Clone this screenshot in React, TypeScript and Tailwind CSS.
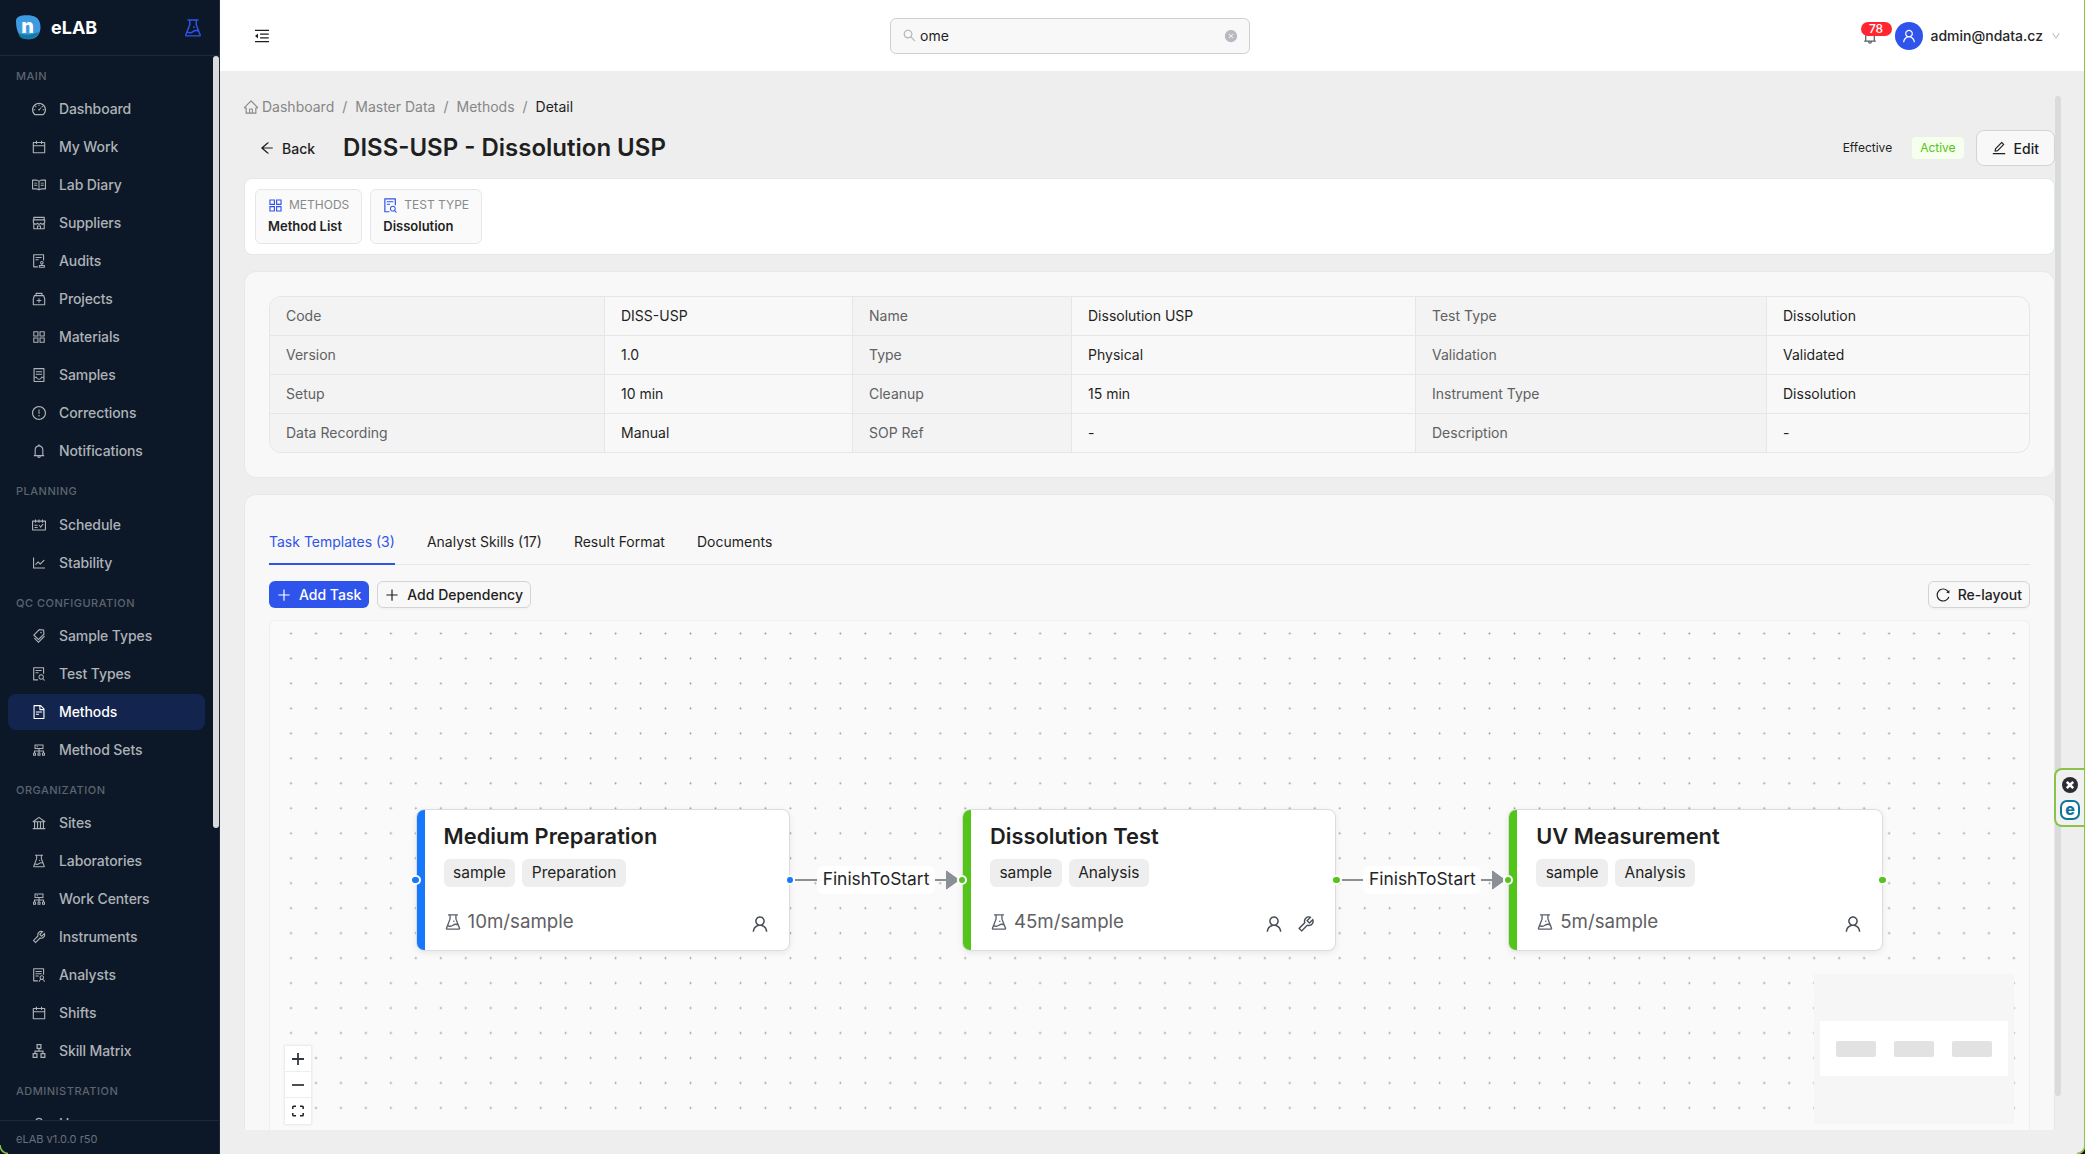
import React from 'react'
import type { IconType } from 'react-icons'
import {
  AiFillCloseCircle,
  AiOutlineApartment,
  AiOutlineAppstore,
  AiOutlineArrowLeft,
  AiOutlineAudit,
  AiOutlineBank,
  AiOutlineBell,
  AiOutlineCalendar,
  AiOutlineCluster,
  AiOutlineContainer,
  AiOutlineDashboard,
  AiOutlineDown,
  AiOutlineEdit,
  AiOutlineExclamationCircle,
  AiOutlineExperiment,
  AiOutlineFileSearch,
  AiOutlineFileText,
  AiOutlineHome,
  AiOutlineLineChart,
  AiOutlineMedicineBox,
  AiOutlineMenuFold,
  AiOutlinePlus,
  AiOutlineRead,
  AiOutlineReload,
  AiOutlineSchedule,
  AiOutlineSearch,
  AiOutlineShop,
  AiOutlineSolution,
  AiOutlineTags,
  AiOutlineTool,
  AiOutlineUser,
} from 'react-icons/ai'

type MenuItem = { label: string; icon: IconType }

const menu: { title: string; items: MenuItem[] }[] = [
  {
    title: 'MAIN',
    items: [
      { label: 'Dashboard', icon: AiOutlineDashboard },
      { label: 'My Work', icon: AiOutlineCalendar },
      { label: 'Lab Diary', icon: AiOutlineRead },
      { label: 'Suppliers', icon: AiOutlineShop },
      { label: 'Audits', icon: AiOutlineAudit },
      { label: 'Projects', icon: AiOutlineMedicineBox },
      { label: 'Materials', icon: AiOutlineAppstore },
      { label: 'Samples', icon: AiOutlineContainer },
      { label: 'Corrections', icon: AiOutlineExclamationCircle },
      { label: 'Notifications', icon: AiOutlineBell },
    ],
  },
  {
    title: 'PLANNING',
    items: [
      { label: 'Schedule', icon: AiOutlineSchedule },
      { label: 'Stability', icon: AiOutlineLineChart },
    ],
  },
  {
    title: 'QC CONFIGURATION',
    items: [
      { label: 'Sample Types', icon: AiOutlineTags },
      { label: 'Test Types', icon: AiOutlineFileSearch },
      { label: 'Methods', icon: AiOutlineFileText },
      { label: 'Method Sets', icon: AiOutlineCluster },
    ],
  },
  {
    title: 'ORGANIZATION',
    items: [
      { label: 'Sites', icon: AiOutlineBank },
      { label: 'Laboratories', icon: AiOutlineExperiment },
      { label: 'Work Centers', icon: AiOutlineCluster },
      { label: 'Instruments', icon: AiOutlineTool },
      { label: 'Analysts', icon: AiOutlineSolution },
      { label: 'Shifts', icon: AiOutlineCalendar },
      { label: 'Skill Matrix', icon: AiOutlineApartment },
    ],
  },
  {
    title: 'ADMINISTRATION',
    items: [{ label: 'Users', icon: AiOutlineUser }],
  },
]

const details = [
  ['Code', 'DISS-USP', 'Name', 'Dissolution USP', 'Test Type', 'Dissolution'],
  ['Version', '1.0', 'Type', 'Physical', 'Validation', 'Validated'],
  ['Setup', '10 min', 'Cleanup', '15 min', 'Instrument Type', 'Dissolution'],
  ['Data Recording', 'Manual', 'SOP Ref', '-', 'Description', '-'],
]

const tabs = ['Task Templates (3)', 'Analyst Skills (17)', 'Result Format', 'Documents']

// x is relative to the left edge of the canvas
const tasks = [
  { name: 'Medium Preparation', tags: ['sample', 'Preparation'], time: '10m/sample', tool: false, x: 145.6, blue: true },
  { name: 'Dissolution Test', tags: ['sample', 'Analysis'], time: '45m/sample', tool: true, x: 691.9, blue: false },
  { name: 'UV Measurement', tags: ['sample', 'Analysis'], time: '5m/sample', tool: false, x: 1238.2, blue: false },
]

const edges = [525, 1071.3]

function Logo() {
  return (
    <div className="relative flex h-[25px] w-[25px] items-center justify-center">
      <svg className="absolute inset-0" width="25" height="25" viewBox="0 0 25 25">
        <path d="M0 6C0 2 4 .3 11 .3c7 0 11.500 2 13 8 1.500 6-.5 12-5 14.500-4 2.200-11 2-14-1C1.300 18 0 12 0 6z" fill="#3f9be0" />
        <path d="M2.500 18c5 2.500 14 2 20.500-1-1 3-3 5-6.500 6.500-4 1.200-9 .8-11.500-.8-1.400-1-2.200-2.700-2.500-4.700z" fill="#137aa3" />
      </svg>
      <span className="relative -top-[2px] -left-[1px] text-[20px] leading-none font-extrabold text-white">n</span>
    </div>
  )
}

function Sidebar() {
  return (
    <aside className="flex h-full w-[220px] shrink-0 flex-col border-r border-[#1f2b3b] bg-[#0c1828]">
      <div className="flex h-14 shrink-0 items-center border-b border-[#1d2939] pr-[15px] pl-4">
        <Logo />
        <span className="ml-[10px] text-[18px] font-bold text-white">eLAB</span>
        <AiOutlineExperiment className="ml-auto text-[22px] text-[#2f54eb]" />
      </div>
      <div className="flex min-h-0 flex-1 justify-between">
        <nav className="h-full w-[213px] overflow-hidden">
          {menu.map((group) => (
            <div key={group.title}>
              <div className="h-[35.3px] pt-3 pl-4 text-[11px] leading-[17.3px] font-medium tracking-[0.5px] text-[#5d646e]">
                {group.title}
              </div>
              {group.items.map(({ label, icon: Icon }) => (
                <div
                  key={label}
                  className={`mb-0.5 ml-2 flex h-9 w-[197px] items-center rounded-lg pl-[23px] text-sm font-medium tracking-[-0.1px] ${
                    label === 'Methods' ? 'bg-[#13244e] text-white' : 'text-[#aeb2b7]'
                  }`}
                >
                  <Icon className="text-[16px]" />
                  <span className="ml-3">{label}</span>
                </div>
              ))}
            </div>
          ))}
        </nav>
        <div className="h-[772px] w-1.5 rounded-full bg-[#d9dcdb]" />
      </div>
      <div className="flex h-[34px] shrink-0 items-center border-t border-[#1d2939] pt-1 pl-4 text-[11px] text-[#6a717b]">
        eLAB v1.0.0 r50
      </div>
    </aside>
  )
}

function Header() {
  return (
    <header className="flex h-[71px] shrink-0 items-center bg-white pr-6 pl-[33px]">
      <AiOutlineMenuFold className="text-[18px] text-[#1f1f1f]" />
      <div className="ml-[619px] flex h-9 w-[360px] items-center rounded-md border border-[#d0d0d0] bg-[#f8f8f8] px-[11px] text-sm">
        <AiOutlineSearch className="text-[15px] text-[#b4b4b8]" />
        <span className="ml-[3px] text-[#1f1f1f]">ome</span>
        <AiFillCloseCircle className="ml-auto text-[14px] text-[#b9b9c0]" />
      </div>
      <div className="ml-auto flex items-center">
        <div className="relative">
          <AiOutlineBell className="text-[18px] text-[#595f69]" />
          <span className="absolute -top-[5px] left-0 flex h-[14px] w-[31px] items-center justify-center rounded-full bg-[#ff2630] text-[12px] font-medium text-white">
            78
          </span>
        </div>
        <div className="ml-4 flex h-7 w-7 items-center justify-center rounded-full bg-[#2f54eb]">
          <AiOutlineUser className="text-[16px] text-white" />
        </div>
        <span className="ml-2 text-sm font-medium text-[#262626]">admin@ndata.cz</span>
        <AiOutlineDown className="ml-2 text-[10px] text-[#a0a0a0]" />
      </div>
    </header>
  )
}

function Breadcrumb() {
  return (
    <div className="flex h-[22px] items-center text-sm text-[#868686]">
      <AiOutlineHome className="-ml-px text-[16px]" />
      <span className="ml-[3px]">Dashboard</span>
      <span className="mx-2">/</span>
      <span>Master Data</span>
      <span className="mx-2">/</span>
      <span>Methods</span>
      <span className="mx-2">/</span>
      <span className="text-[#1f1f1f]">Detail</span>
    </div>
  )
}

function LinkTile({ icon: Icon, label, value }: { icon: IconType; label: string; value: string }) {
  return (
    <div className="h-[55px] rounded-md border border-[#e6e6e8] bg-[#fafafa] px-3 pt-[5px]">
      <div className="flex h-5 items-center text-[12px] text-[#868a8c]">
        <Icon className="-ml-px text-[17px] text-[#2f54eb]" />
        <span className="ml-[5px]">{label}</span>
      </div>
      <div className="mt-px text-[13px] leading-5 font-semibold text-[#1f1f1f]">{value}</div>
    </div>
  )
}

function DetailsTable() {
  return (
    <div className="overflow-hidden rounded-xl border border-[#e6e6e6] text-sm">
      {details.map((row, i) => (
        <div
          key={row[0]}
          className={`grid grid-cols-[335px_248px_219px_344px_351px_1fr] ${i ? 'h-[39px] border-t border-[#e6e6e6]' : 'h-[38px]'}`}
        >
          {row.map((cell, j) => (
            <div
              key={j}
              className={`flex items-center pl-4 ${j < 5 ? 'border-r border-[#e6e6e6]' : ''} ${
                j % 2 ? 'text-[#1f1f1f]' : 'bg-[#f3f3f3] text-[#5f6163]'
              }`}
            >
              {cell}
            </div>
          ))}
        </div>
      ))}
    </div>
  )
}

function Handle({ blue, side }: { blue: boolean; side: 'left' | 'right' }) {
  return (
    <span
      className={`absolute top-[65.5px] h-[10.6px] w-[10.6px] rounded-full border-2 border-white ${
        blue ? 'bg-[#1677ff]' : 'bg-[#52c41a]'
      } ${side === 'left' ? '-left-[5.3px]' : '-right-[5.3px]'}`}
    />
  )
}

function TaskNode({ task }: { task: (typeof tasks)[number] }) {
  return (
    <div className="absolute top-[188px] h-[142px] w-[374.6px]" style={{ left: task.x }}>
      <div className="flex h-full overflow-hidden rounded-[8px] border border-[#dcdcdc] bg-white shadow-[0_2px_6px_rgba(0,0,0,0.08)]">
        <div className={`-my-px -ml-px w-[9px] shrink-0 ${task.blue ? 'bg-[#1677ff]' : 'bg-[#52c41a]'}`} />
        <div className="flex flex-1 flex-col pt-[11px] pr-5 pl-[19px]">
          <div className="text-[21.85px] leading-[30px] font-semibold text-[#1f1f1f]">{task.name}</div>
          <div className="mt-2 flex gap-[7px]">
            {task.tags.map((tag) => (
              <span key={tag} className="flex h-7 items-center rounded-[6px] bg-[#eeeeee] px-[9.5px] text-[15.5px] text-[#1f1f1f]">
                {tag}
              </span>
            ))}
          </div>
          <div className="mt-[21px] flex h-[28px] items-center text-[18.7px] text-[#5f6163]">
            <AiOutlineExperiment className="-ml-px text-[20px] text-[#595f69]" />
            <span className="ml-[5px]">{task.time}</span>
            <div className="-mr-px ml-auto flex gap-3 pt-1 text-[20px] text-[#474d57]">
              <AiOutlineUser />
              {task.tool && <AiOutlineTool />}
            </div>
          </div>
        </div>
      </div>
      <Handle blue={task.blue} side="left" />
      <Handle blue={task.blue} side="right" />
    </div>
  )
}

function Edge({ x }: { x: number }) {
  return (
    <div className="absolute top-[245px] h-7 w-[164px]" style={{ left: x }}>
      <svg className="absolute inset-0" width="164" height="28" viewBox="0 0 164 28">
        <path d="M0 14h152" stroke="#8b9097" strokeWidth="2" />
        <path d="M151.500 5l12.500 9-12.500 9z" fill="#8b9097" stroke="#8b9097" strokeLinejoin="round" />
      </svg>
      <div className="absolute left-[22px] flex h-7 w-[118px] items-center justify-center rounded-[6px] bg-white/95 pb-0.5 text-[17.4px] text-[#262626]">
        FinishToStart
      </div>
    </div>
  )
}

function Canvas() {
  return (
    <div className="relative mt-3 h-[640px] rounded-md border border-[#efefef] bg-[#fafafa]">
      <svg className="absolute inset-0" width="1759" height="509">
        <defs>
          <pattern id="dots" x="8.500" y="0" width="24.97" height="24.97" patternUnits="userSpaceOnUse">
            <circle cx="12.500" cy="12.500" r="0.9" fill="#92929a" />
          </pattern>
        </defs>
        <rect width="1759" height="509" fill="url(#dots)" />
      </svg>
      {edges.map((x) => (
        <Edge key={x} x={x} />
      ))}
      {tasks.map((task) => (
        <TaskNode key={task.name} task={task} />
      ))}
      <div className="absolute top-[425px] left-[15px] w-[26px] bg-white shadow-[0_0_2px_1px_rgba(0,0,0,0.08)]">
        <div className="flex h-[26px] items-center justify-center border-b border-[#eeeeee]">
          <svg width="12" height="12" viewBox="0 0 12 12">
            <path d="M6 0v12M0 6h12" stroke="#333841" strokeWidth="1.800" />
          </svg>
        </div>
        <div className="flex h-[26px] items-center justify-center border-b border-[#eeeeee]">
          <svg width="12" height="12" viewBox="0 0 12 12">
            <path d="M0 6h12" stroke="#222" strokeWidth="1.600" />
          </svg>
        </div>
        <div className="flex h-[26px] items-center justify-center">
          <svg width="12" height="12" viewBox="0 0 12 12" fill="none" stroke="#222" strokeWidth="1.500">
            <path d="M.8 4V2Q.8 1.200 1.600 1.200H4M8 1.200h2.400q.8 0 .8.8v2M11.200 8v2q0 .8-.8.8H8M4 10.800H1.600Q.8 10.800.8 10V8" />
          </svg>
        </div>
      </div>
      <div className="absolute top-[353px] left-[1544px] h-[150px] w-[200px] bg-[#f6f6f6] pt-[47px] pl-[6px]">
        <div className="flex h-[55px] w-[188px] items-center gap-[18px] bg-white pt-px pl-4">
          <div className="h-4 w-10 rounded-[2px] bg-[#e2e2e2]" />
          <div className="h-4 w-10 rounded-[2px] bg-[#e2e2e2]" />
          <div className="h-4 w-10 rounded-[2px] bg-[#e2e2e2]" />
        </div>
      </div>
    </div>
  )
}

function SideWidget() {
  return (
    <div className="absolute top-[768px] right-0 flex h-[59px] w-[31px] flex-col items-center gap-[7px] rounded-l-lg border-2 border-r-0 border-[#8bc34a] bg-[#f1f1f1] pt-[7px] pr-px">
      <svg width="16" height="16" viewBox="0 0 16 16">
        <circle cx="8" cy="8" r="8" fill="#2b2d36" />
        <path d="M4.800 4.800l6.400 6.400M11.200 4.800l-6.400 6.400" stroke="#fff" strokeWidth="2.600" />
      </svg>
      <div className="flex h-5 w-5 items-center justify-center rounded-[7px] border-2 border-[#11749b] bg-white pb-0.5 text-[16px] leading-none font-extrabold text-[#11749b]">
        e
      </div>
    </div>
  )
}

function App() {
  return (
    <div className="relative flex h-[1154px] w-[2085px] overflow-hidden bg-[#eeeeee] font-['Inter',sans-serif]">
      <Sidebar />
      <div className="flex min-w-0 flex-1 flex-col">
        <Header />
        <main className="mt-[25px] flex h-[1034px] pl-6">
          <div className="h-full w-[1811px] overflow-hidden">
            <Breadcrumb />
            <div className="mt-3 flex h-9 items-center">
              <div className="flex items-center pl-[15px] text-sm font-medium text-[#1f1f1f]">
                <AiOutlineArrowLeft className="text-[16px]" />
                <span className="ml-[7px] pt-0.5">Back</span>
              </div>
              <h1 className="ml-7 text-[24px] font-semibold text-[#1f1f1f]">DISS-USP - Dissolution USP</h1>
              <span className="ml-auto text-[12px] text-[#1f1f1f]">Effective</span>
              <span className="ml-5 flex h-[22px] items-center rounded bg-[#f6ffed] px-2 text-[12px] text-[#52c41a]">Active</span>
              <button className="ml-3 flex h-9 items-center rounded-lg border border-[#d4d4d4] bg-[#f8f8f8] px-[15px] text-sm font-medium text-[#1f1f1f]">
                <AiOutlineEdit className="-mx-px text-[16px]" />
                <span className="ml-2 pt-0.5">Edit</span>
              </button>
            </div>

            <div className="mt-3 flex h-[77px] gap-2 rounded-lg border border-[#e6e7ee] bg-white p-[10px]">
              <LinkTile icon={AiOutlineAppstore} label="METHODS" value="Method List" />
              <LinkTile icon={AiOutlineFileSearch} label="TEST TYPE" value="Dissolution" />
            </div>

            <div className="mt-4 rounded-xl border border-[#e8e8e8] bg-[#f8f8f8] p-6">
              <DetailsTable />
            </div>

            <div className="mt-4 rounded-xl border border-[#e8e8e8] bg-[#f8f8f8] px-6 pt-6">
              <div className="flex h-[46px] gap-8 border-b border-[#e6e6e6] text-sm text-[#1f1f1f]">
                {tabs.map((tab, i) => (
                  <div key={tab} className={`h-[46px] pt-[13px] ${i === 0 ? 'border-b-2 border-[#2f54eb] text-[#2f54eb]' : ''}`}>
                    {tab}
                  </div>
                ))}
              </div>
              <div className="mt-4 flex h-[27px] gap-2 text-sm font-medium">
                <button className="flex items-center rounded-md bg-[#2f54eb] px-2 text-white">
                  <AiOutlinePlus className="-mx-px text-[16px]" />
                  <span className="ml-2">Add Task</span>
                </button>
                <button className="flex items-center rounded-md border border-[#d4d4d4] px-[7px] text-[#1f1f1f] shadow-[0_2px_0_rgba(0,0,0,0.02)]">
                  <AiOutlinePlus className="-mx-px text-[16px]" />
                  <span className="ml-2">Add Dependency</span>
                </button>
                <button className="ml-auto flex items-center rounded-md border border-[#d4d4d4] px-[7px] text-[#1f1f1f] shadow-[0_2px_0_rgba(0,0,0,0.02)]">
                  <AiOutlineReload className="-mx-px text-[16px]" />
                  <span className="ml-2">Re-layout</span>
                </button>
              </div>
              <Canvas />
            </div>
          </div>
          <div className="h-[1000px] w-1.5 rounded-full bg-[#d9dcdb]" />
        </main>
      </div>
      <SideWidget />
      <div className="absolute top-0 right-0 h-full w-px bg-[#8bc34a]" />
      <svg className="absolute bottom-0 left-0" width="8" height="9" viewBox="0 0 8 9">
        <path d="M0 3v6h6Q1.500 8 0 3z" fill="#111" />
        <path d="M0 0Q.5 7.500 8 8.500" stroke="#8bc34a" strokeWidth="1.500" fill="none" />
      </svg>
      <svg className="absolute right-0 bottom-0" width="8" height="9" viewBox="0 0 8 9">
        <path d="M8 3v6H2Q6.500 8 8 3z" fill="#111" />
        <path d="M8 0Q7.500 7.500 0 8.500" stroke="#8bc34a" strokeWidth="1.500" fill="none" />
      </svg>
    </div>
  )
}

export default App
